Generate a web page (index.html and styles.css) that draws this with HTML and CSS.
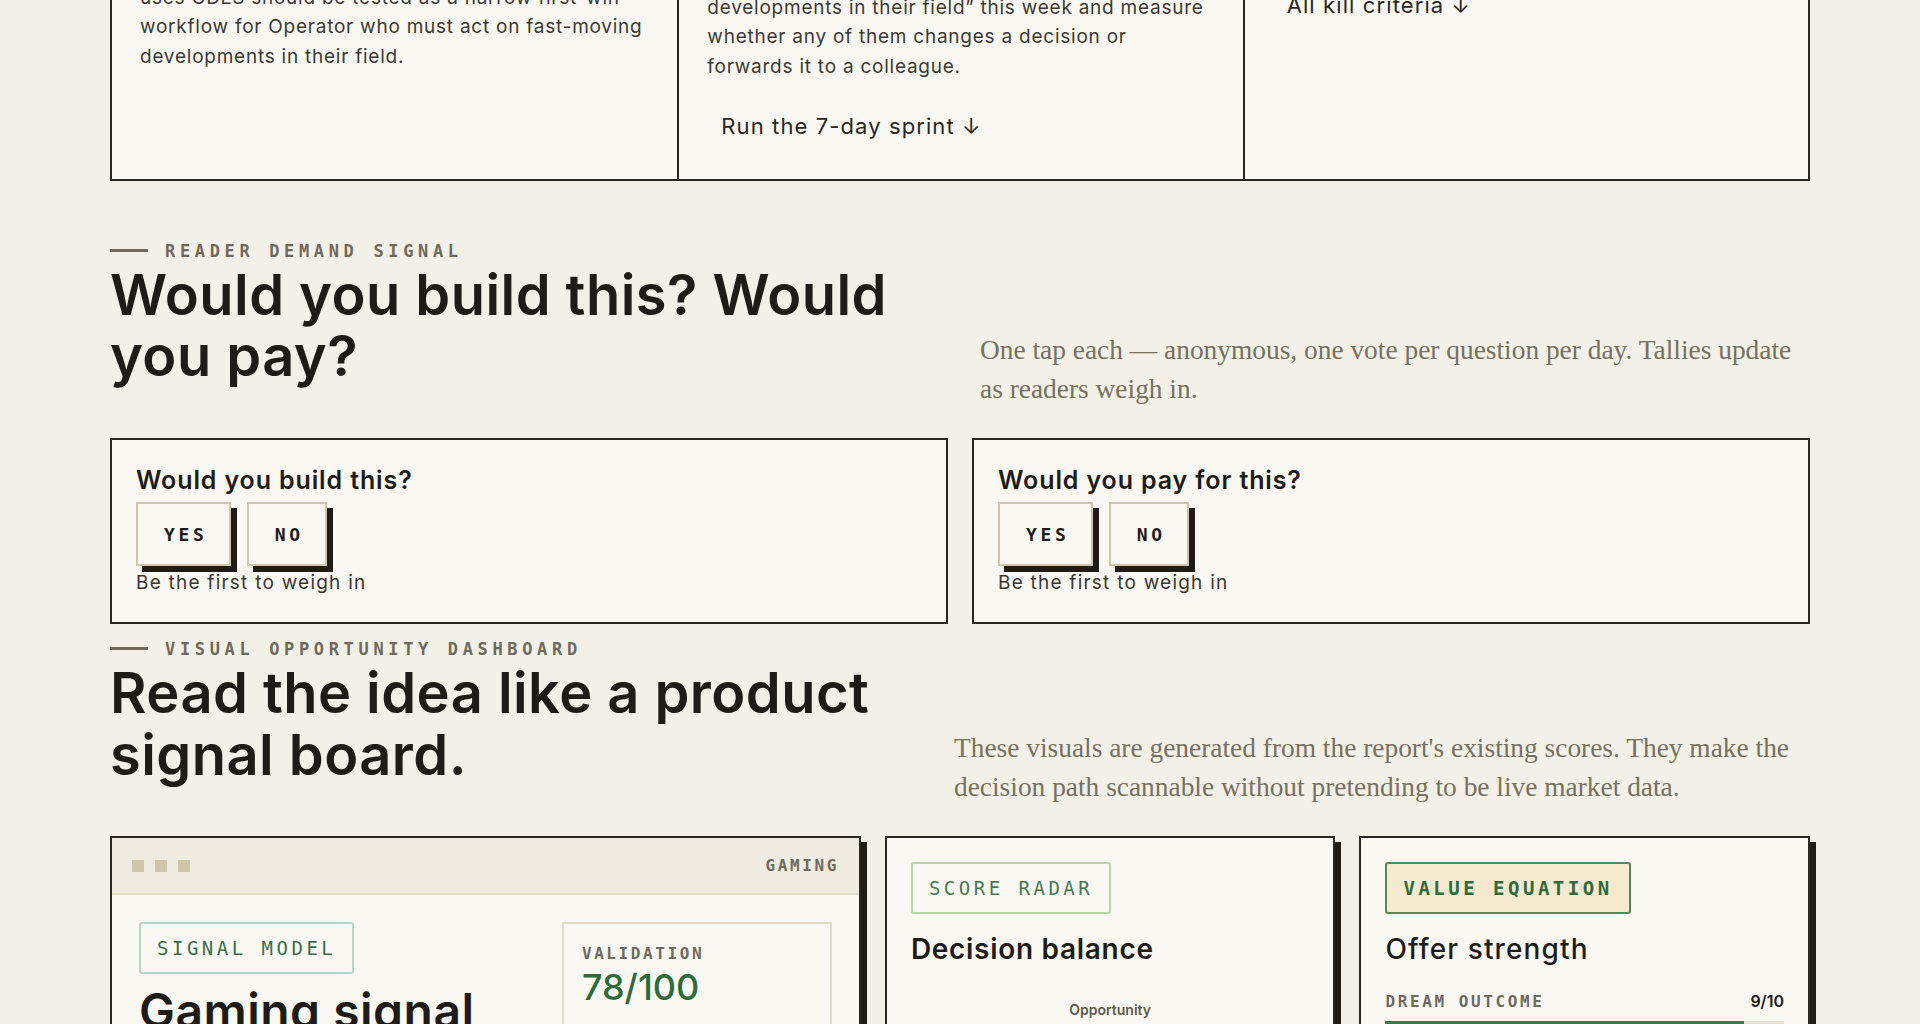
FILE: index.html
```html
<!DOCTYPE html>
<html lang="en">
<head>
<meta charset="utf-8">
<title>Gaming signal — idea report</title>
<link rel="stylesheet" href="styles.css">
</head>
<body>
<main class="page">
  <section class="plan">
    <div class="plan-grid">
      <article class="plan-col">
        <p class="plan-label">Verdict</p>
        <h3 class="plan-title">Start narrow</h3>
        <p class="plan-text">Do not launch a broad news product for now. Realistically, the sharpest wedge for everyone who uses CDLS should be tested as a narrow first-win workflow for Operator who must act on fast-moving developments in their field.</p>
      </article>
      <article class="plan-col">
        <p class="plan-label">First test</p>
        <h3 class="plan-title">Manual digest for five operators</h3>
        <p class="plan-text">Hand-send a daily digest of “fast-moving developments in their field” this week and measure whether any of them changes a decision or forwards it to a colleague.</p>
        <a class="plan-link" href="#sprint">Run the 7-day sprint ↓</a>
      </article>
      <article class="plan-col plan-col--kill">
        <p class="plan-label">Kill criteria</p>
        <h3 class="plan-title">Stop if nobody acts</h3>
        <p class="plan-text">Walk away if no reader acts on it.</p>
        <a class="plan-link" href="#kill">All kill criteria ↓</a>
      </article>
    </div>
  </section>

  <section class="section section--demand">
    <div class="section-head">
      <div class="section-titles">
        <p class="eyebrow">Reader demand signal</p>
        <h2 class="section-title">Would you build this? Would you pay?</h2>
      </div>
      <p class="section-lede section-lede--demand">One tap each — anonymous, one vote per question per day. Tallies update as readers weigh in.</p>
    </div>
    <div class="vote-grid">
      <div class="vote-card">
        <h3 class="vote-q">Would you build this?</h3>
        <div class="vote-actions">
          <button class="vote-btn" type="button">Yes</button>
          <button class="vote-btn" type="button">No</button>
        </div>
        <p class="vote-tally">Be the first to weigh in</p>
      </div>
      <div class="vote-card">
        <h3 class="vote-q">Would you pay for this?</h3>
        <div class="vote-actions">
          <button class="vote-btn" type="button">Yes</button>
          <button class="vote-btn" type="button">No</button>
        </div>
        <p class="vote-tally">Be the first to weigh in</p>
      </div>
    </div>
  </section>

  <section class="section section--board">
    <div class="section-head">
      <div class="section-titles">
        <p class="eyebrow">Visual opportunity dashboard</p>
        <h2 class="section-title">Read the idea like a product signal board.</h2>
      </div>
      <p class="section-lede section-lede--board">These visuals are generated from the report's existing scores. They make the decision path scannable without pretending to be live market data.</p>
    </div>
    <div class="board-grid">
      <article class="board-card board-card--signal">
        <header class="window-bar">
          <span class="window-dots"><i></i><i></i><i></i></span>
          <span class="window-tag">Gaming</span>
        </header>
        <div class="signal-body">
          <div class="signal-main">
            <span class="pill pill--teal">Signal model</span>
            <h3 class="signal-title">Gaming signal strength</h3>
          </div>
          <div class="stat-box">
            <p class="stat-label">Validation</p>
            <p class="stat-value">78/100</p>
          </div>
        </div>
      </article>

      <article class="board-card board-card--pad">
        <span class="pill pill--green">Score radar</span>
        <h3 class="card-title">Decision balance</h3>
        <div class="radar">
          <p class="radar-axis">Opportunity</p>
          <svg class="radar-svg" viewBox="0 0 300 240" width="300" height="240" aria-hidden="true">
            <polygon points="150,10 280,100 230,230 70,230 20,100" fill="none" stroke="#e2dbc8" stroke-width="2"/>
            <polygon points="150,60 230,105 200,190 100,190 70,105" fill="none" stroke="#e2dbc8" stroke-width="2"/>
            <polygon points="150,30 255,102 205,205 95,215 45,100" fill="rgba(61,122,74,0.15)" stroke="#3d7a4a" stroke-width="2"/>
          </svg>
        </div>
      </article>

      <article class="board-card board-card--pad">
        <span class="pill pill--solid">Value equation</span>
        <h3 class="card-title card-title--light">Offer strength</h3>
        <div class="meter">
          <div class="meter-row">
            <span class="meter-label">Dream outcome</span>
            <span class="meter-value">9/10</span>
          </div>
          <div class="meter-track"><div class="meter-fill" style="width: 90%"></div></div>
        </div>
      </article>
    </div>
  </section>
</main>
</body>
</html>
```

FILE: styles.css
```css
* { box-sizing: border-box; }

html, body {
  margin: 0;
  padding: 0;
  background: #f3f0e8;
  color: #1f1c17;
  font-family: "Inter", "Liberation Sans", sans-serif;
}

body { overflow: hidden; }

p, h2, h3 { margin: 0; }

.page {
  max-width: 1700px;
  margin: 0 auto;
}

/* ---------- top plan strip (scrolled partly out of view) ---------- */
.plan { margin-top: -190px; }

.plan-grid {
  display: grid;
  grid-template-columns: repeat(3, 1fr);
  border: 2px solid #2a2620;
  background: #faf8f3;
}

.plan-col {
  padding: 28px;
  display: flex;
  flex-direction: column;
  align-items: flex-start;
}

.plan-col + .plan-col { border-left: 2px solid #2a2620; }

.plan-label {
  font-family: "DejaVu Sans Mono", monospace;
  font-size: 14px;
  line-height: 20px;
  letter-spacing: 0.2em;
  text-transform: uppercase;
  color: #6f6a5b;
  margin-bottom: 12px;
}

.plan-title {
  font-size: 33px;
  line-height: 39.6px;
  font-weight: 600;
  margin-bottom: 12px;
}

.plan-text {
  font-size: 19px;
  line-height: 29.5px;
  letter-spacing: 0.04em;
  color: #3d3932;
  margin-bottom: 21px;
}

.plan-col--kill .plan-text { margin-bottom: 28px; }

.plan-link {
  display: inline-block;
  padding: 10px 14px;
  font-size: 22px;
  line-height: 1.3;
  letter-spacing: 0.05em;
  color: #2a2620;
  text-decoration: none;
}

/* ---------- section headers ---------- */
.section--demand { padding-top: 60px; }
.section--board { padding-top: 15px; }

.section-head {
  display: flex;
  justify-content: space-between;
  align-items: flex-end;
  margin-bottom: 29px;
}

.section-titles { max-width: 820px; }

.eyebrow {
  display: flex;
  align-items: center;
  gap: 17px;
  font-family: "DejaVu Sans Mono", monospace;
  font-weight: 700;
  font-size: 17px;
  line-height: 20px;
  letter-spacing: 4.65px;
  text-transform: uppercase;
  color: #6f6a5b;
}

.eyebrow::before {
  content: "";
  width: 38px;
  height: 3px;
  background: #6f6a5b;
}

.section-title {
  margin-top: 4px;
  margin-bottom: 21px;
  font-size: 56px;
  line-height: 1.1;
  font-weight: 600;
  letter-spacing: 0.008em;
  color: #1f1c17;
}

.section-lede {
  font-family: "Liberation Serif", "DejaVu Serif", serif;
  font-size: 27.4px;
  line-height: 39px;
  color: #77715f;
}

.section-lede--demand { width: 830px; }
.section-lede--board { width: 856px; }

/* ---------- vote cards ---------- */
.vote-grid {
  display: grid;
  grid-template-columns: 1fr 1fr;
  gap: 24px;
}

.vote-card {
  border: 2px solid #2a2620;
  background: #faf8f3;
  padding: 24px;
}

.vote-q {
  font-size: 25px;
  line-height: 1.3;
  font-weight: 600;
  letter-spacing: 0.035em;
  margin-bottom: 6px;
}

.vote-actions {
  display: flex;
  gap: 16px;
}

.vote-btn {
  height: 64px;
  padding: 0 21px 0 26px;
  border: 2px solid #cfc6ad;
  background: #faf8f3;
  box-shadow: 6px 6px 0 #1f1c16;
  font-family: "DejaVu Sans Mono", monospace;
  font-weight: 700;
  font-size: 18px;
  letter-spacing: 3.7px;
  text-transform: uppercase;
  color: #1f1c17;
  cursor: pointer;
}

.vote-tally {
  margin-top: 3px;
  font-size: 19px;
  line-height: 1.5;
  letter-spacing: 0.065em;
  color: #3a362e;
}

/* ---------- dashboard ---------- */
.board-grid {
  display: grid;
  grid-template-columns: 5fr 3fr 3fr;
  gap: 24px;
  align-items: start;
}

.board-card {
  border: 2px solid #2a2620;
  background: #faf8f3;
  box-shadow: 6px 6px 0 #1f1c16;
  min-height: 420px;
}

.board-card--pad {
  padding: 24px;
  display: flex;
  flex-direction: column;
  align-items: flex-start;
}

.window-bar {
  height: 57px;
  padding: 0 20px;
  display: flex;
  align-items: center;
  justify-content: space-between;
  background: #efebe0;
  border-bottom: 2px solid #e4ddcb;
}

.window-dots { display: flex; gap: 11px; }

.window-dots i {
  display: block;
  width: 12px;
  height: 12px;
  background: #cfc6aa;
}

.window-tag,
.stat-label,
.meter-label {
  font-family: "DejaVu Sans Mono", monospace;
  font-weight: 700;
  font-size: 16px;
  line-height: 22px;
  letter-spacing: 2.6px;
  text-transform: uppercase;
  color: #6f6a5b;
}

.signal-body {
  padding: 27px;
  display: grid;
  grid-template-columns: 1fr 270px;
  gap: 22px;
  align-items: start;
}

.signal-main {
  display: flex;
  flex-direction: column;
  align-items: flex-start;
}

.pill {
  display: inline-block;
  padding: 13px 16px;
  border: 2px solid;
  border-radius: 3px;
  font-family: "DejaVu Sans Mono", monospace;
  font-size: 19px;
  line-height: 22px;
  letter-spacing: 3.5px;
  text-transform: uppercase;
}

.pill--teal { border-color: #bcd3c8; color: #3b6e48; }
.pill--green { border-color: #bcd4a9; color: #457a50; }
.pill--solid {
  border-color: #4f8a5a;
  background: #f5e9d0;
  color: #2f6b3a;
  font-weight: 700;
}

.signal-title {
  margin-top: 12px;
  font-size: 48px;
  line-height: 1.05;
  font-weight: 600;
  letter-spacing: 0.01em;
}

.stat-box {
  border: 2px solid #e3dcc8;
  padding: 19px 18px;
}

.stat-value {
  margin-top: 3px;
  font-size: 36px;
  line-height: 1.1;
  font-weight: 500;
  color: #2f6b3a;
}

.card-title {
  margin-top: 19px;
  font-size: 28px;
  line-height: 1.2;
  font-weight: 600;
  letter-spacing: 0.025em;
}

.card-title--light { font-weight: 500; letter-spacing: 0.04em; }

.radar {
  align-self: stretch;
  margin-top: 34px;
  display: flex;
  flex-direction: column;
  align-items: center;
}

.radar-axis {
  font-size: 14px;
  line-height: 1.3;
  font-weight: 600;
  color: #5f5a4c;
}

.radar-svg { margin-top: 6px; }

.meter {
  align-self: stretch;
  margin-top: 24px;
}

.meter-row {
  display: flex;
  justify-content: space-between;
  align-items: baseline;
}

.meter-value {
  font-size: 16px;
  font-weight: 600;
  color: #1f1c17;
}

.meter-track {
  margin-top: 8px;
  height: 8px;
  background: #e6e0cf;
}

.meter-fill {
  height: 100%;
  background: #3d7a4a;
}
```
